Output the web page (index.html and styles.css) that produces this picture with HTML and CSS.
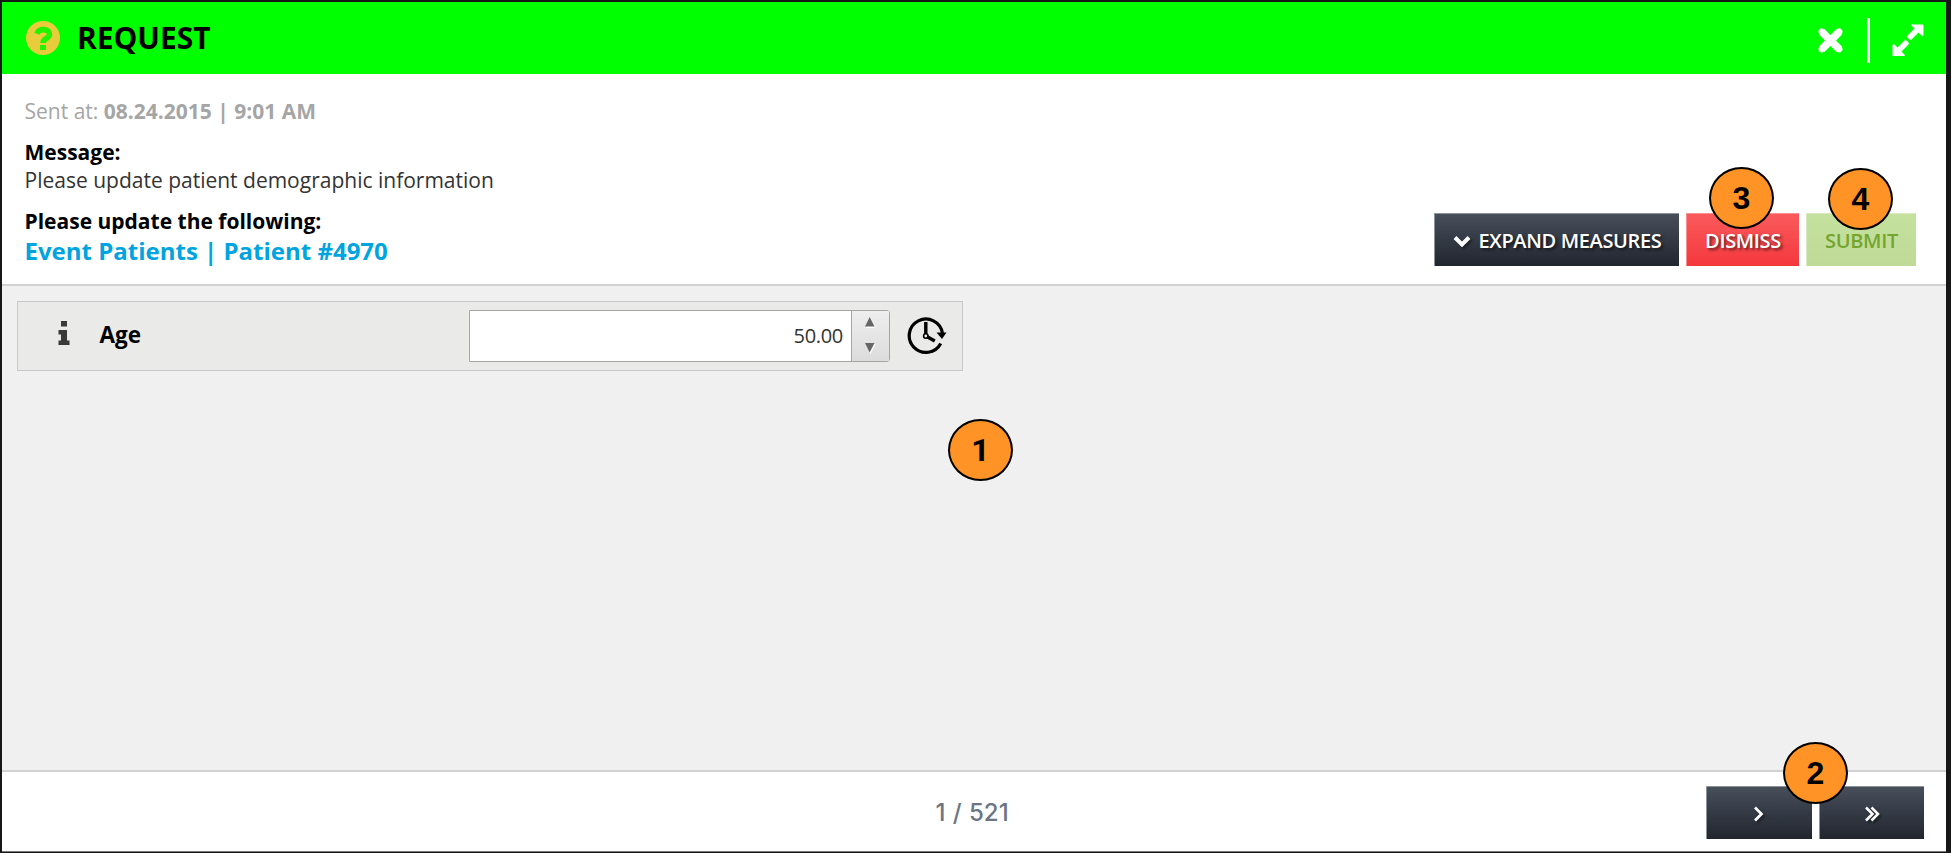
FILE: index.html
```html
<!DOCTYPE html>
<html lang="en">
<head>
<meta charset="utf-8">
<title>Request</title>
<link rel="stylesheet" href="styles.css">
</head>
<body>
<main class="dialog">
  <header class="titlebar">
    <svg class="help" viewBox="0 0 34 34"><circle cx="17" cy="17" r="17" fill="#e8cc3c"/><path d="M10.800 12.800C12 9.800 14.500 8.600 17.500 8.600c3.700 0 6 2 6 4.700 0 4.200-6.500 4-6.500 8.700" fill="none" stroke="#22f400" stroke-width="5.600"/><rect x="14" y="24" width="6" height="5" fill="#22f400"/></svg>
    <h1 class="title">REQUEST</h1>
    <div class="window-actions">
      <svg class="close" viewBox="0 0 26 26"><path d="M4.500 4.500l17 17M21.500 4.500l-17 17" stroke="#fff" stroke-width="7.500" stroke-linecap="butt" /><path d="M4.500 4.500l17 17M21.500 4.500l-17 17" stroke="#fff" stroke-width="6" stroke-linecap="round"/></svg>
      <span class="divider"></span>
      <svg class="resize" viewBox="0 0 32 32"><path d="M21 .5h9.500q1 0 1 1v9.500q-.8 1.500-2 .6l-3-3-7 7q-1 .8-2 0l-2-2q-.8-1 0-2l7-7-3-3q-.8-1.300.5-2.100zM.5 21q.8-1.500 2-.6l3 3 7-7q1-.8 2 0l2 2q.8 1 0 2l-7 7 3 3q.8 1.300-.5 2.100H1.500q-1 0-1-1z" fill="#fff"/></svg>
    </div>
  </header>
  <section class="summary">
    <div class="details">
      <p class="sent">Sent at: <b>08.24.2015 | 9:01 AM</b></p>
      <p class="label message-label">Message:</p>
      <p class="message">Please update patient demographic information</p>
      <p class="label update-label">Please update the following:</p>
      <a class="link">Event Patients | Patient #4970</a>
    </div>
    <div class="actions">
      <button class="btn dark expand"><svg class="chevron" viewBox="0 0 18 12"><path d="M2 2.500L9 9.500l7-7" fill="none" stroke="#fff" stroke-width="4"/></svg><span>EXPAND MEASURES</span></button>
      <button class="btn red dismiss"><span>DISMISS</span><i class="badge badge-3">3</i></button>
      <button class="btn green submit"><span>SUBMIT</span><i class="badge badge-4">4</i></button>
    </div>
  </section>
  <section class="content">
    <div class="field">
      <svg class="info" viewBox="0 0 12 24"><path d="M3 0h6v5.500H3zM.5 9H9v10.500h2.500V24H.5v-4.500H3v-6H.5z" fill="#3a3a3a"/></svg>
      <label class="field-name">Age</label>
      <div class="number">
        <span class="value">50.00</span>
        <span class="spinner">
          <svg viewBox="0 0 12 11"><path d="M2 11h9.500L7 1.500z" fill="#fff"/><path d="M1 9.500h9.500L5.700 0z" fill="#666"/></svg>
          <svg viewBox="0 0 12 11"><path d="M2 1h9.500L6.500 11z" fill="#fff"/><path d="M1 0h9.500L5.700 9.500z" fill="#666"/></svg>
        </span>
      </div>
      <svg class="history" viewBox="0 0 40 38"><path d="M35.400 16A16.700 16.700 0 1 0 33.700 26.500" fill="none" stroke="#000" stroke-width="3.200"/><path d="M29.500 15.500h10L35 22z"/><path d="M18.800 5v14l9 5" fill="none" stroke="#000" stroke-width="3.400"/><circle cx="18.800" cy="19" r="2.200" fill="#eee" stroke="#000" stroke-width="1.600"/></svg>
    </div>
    <i class="badge badge-1">1</i>
  </section>
  <footer class="pager">
    <span class="count">1 / 521</span>
    <div class="pages">
      <button class="btn dark page"><svg viewBox="0 0 18 16"><path d="M5 1.500L11.500 8 5 14.500" fill="none" stroke="#fff" stroke-width="2.700"/></svg><i class="badge badge-2">2</i></button>
      <button class="btn dark page"><svg viewBox="0 0 18 16"><path d="M3 1.500L9.500 8 3 14.500M8.500 1.500L15 8l-6.500 6.500" fill="none" stroke="#fff" stroke-width="2.500"/></svg></button>
    </div>
  </footer>
</main>
</body>
</html>
```
FILE: styles.css
```css
* { box-sizing: border-box; }
body { margin: 0; height: 853px; padding: 2px 5px 1px 2px; background: #171717; font-family: "Open Sans", sans-serif; color: #000; overflow: hidden; }
p, h1 { margin: 0; white-space: nowrap; }
.dialog { height: 850px; display: flex; flex-direction: column; background: #fff; }
.titlebar { height: 72px; flex: none; display: flex; align-items: center; padding: 0 22px 0 24px; background: #0f0; }
.help { width: 34px; height: 34px; margin-top: 0; }
.title { margin-left: 17px; font-size: 30px; line-height: 40px; font-weight: 700; letter-spacing: -.05px; }
.window-actions { display: flex; align-items: center; margin-left: auto; padding-top: 4px; }
.close { width: 27px; height: 27px; fill: none; }
.divider { width: 3px; height: 45px; margin: 0 22px 0 23px; background: #fff; }
.resize { width: 32px; height: 32px; margin-top: -1px; }
.summary { height: 212px; flex: none; display: flex; justify-content: space-between; align-items: flex-end; padding: 0 30px 18px 22.5px; border-bottom: 2px solid #d1d1d1; }
.details { align-self: flex-start; padding-top: 23px; font-size: 21px; line-height: 28px; }
.sent { color: #a5a5a5; font-weight: 400; }
.sent b { font-weight: 700; }
.label { font-weight: 700; }
.message-label { margin-top: 13px; }
.message { font-weight: 400; color: #333; }
.update-label { margin-top: 13px; }
.link { display: block; color: #00a4e0; font-weight: 700; font-size: 24px; line-height: 32px; white-space: nowrap; }
.actions { display: flex; gap: 7px; }
.btn { position: relative; display: flex; align-items: center; justify-content: center; height: 53px; padding: 2px 0 0; border: 0; border-top: 1px solid #8d939b; border-left: 1px solid #8d939b; font: 600 20px/28px "Open Sans", sans-serif; letter-spacing: -.35px; color: #fff; white-space: nowrap; text-shadow: 2px 2px 3px rgba(0,0,0,.6); }
.dark { background: linear-gradient(#474f5b, #21252e); }
.red { background: linear-gradient(#fa5a5c, #f4383d); border-color: #f98f8f; }
.green { background: linear-gradient(#c5e19e, #bfda97); border-color: #d9e9bf; color: #74a52f; text-shadow: none; }
.expand { width: 245px; gap: 8px; }
.dismiss { width: 113px; }
.submit { width: 110px; }
.chevron { width: 18px; height: 12px; }
.btn svg { filter: drop-shadow(2px 2px 1px rgba(0,0,0,.4)); }
.badge { position: absolute; width: 65px; height: 62px; border: 2px solid #000; border-radius: 50%; background: #ff9326; color: #000; font: bold 32px/59px "Liberation Sans", Arial, sans-serif; letter-spacing: 0; text-align: center; text-shadow: none; z-index: 1; }
.badge-3 { left: 22px; top: -47px; }
.badge-4 { left: 21px; top: -46px; }
.badge-2 { left: 76px; top: -45px; }
.badge-1 { left: 946px; top: 133px; font-family: Roboto, sans-serif; }
.content { position: relative; flex: 1; padding: 15px; background: #f0f0f0; }
.field { display: flex; align-items: center; width: 946px; height: 70px; padding-left: 40px; border: 1px solid #c9c9c9; background: #eaeae8; }
.info { width: 12px; height: 24px; margin-top: -6px; }
.field-name { width: 369.5px; margin: -3px 0 0 29.5px; font-size: 22.5px; font-weight: 700; }
.number { display: flex; width: 421px; height: 52px; border: 1px solid #a5a5a5; border-radius: 0 3px 3px 0; background: #fff; }
.value { flex: 1; padding-right: 8px; text-align: right; font-size: 20px; line-height: 50px; font-weight: 400; letter-spacing: -.3px; color: #333; }
.spinner { width: 38px; display: flex; flex-direction: column; align-items: center; justify-content: center; gap: 15px; padding: 0 1px 2px 0; border-left: 1px solid #a5a5a5; background: linear-gradient(#eee, #dcdcdc); }
.spinner svg { width: 12px; height: 11px; }
.history { width: 40px; height: 38px; margin-left: 17px; }
.pager { position: relative; height: 82px; flex: none; display: grid; grid-template-columns: 1fr auto 1fr; align-items: center; padding: 2px 22px 0 18px; border-top: 2px solid #d1d1d1; border-bottom: 1px solid #777; }
.count { grid-column: 2; font: 500 24px/30px Inter, sans-serif; word-spacing: 1px; color: #6c7584; }
.pages { display: flex; gap: 7px; justify-self: end; }
.page { width: 105.5px; }
.page svg { width: 18px; height: 16px; }
```
